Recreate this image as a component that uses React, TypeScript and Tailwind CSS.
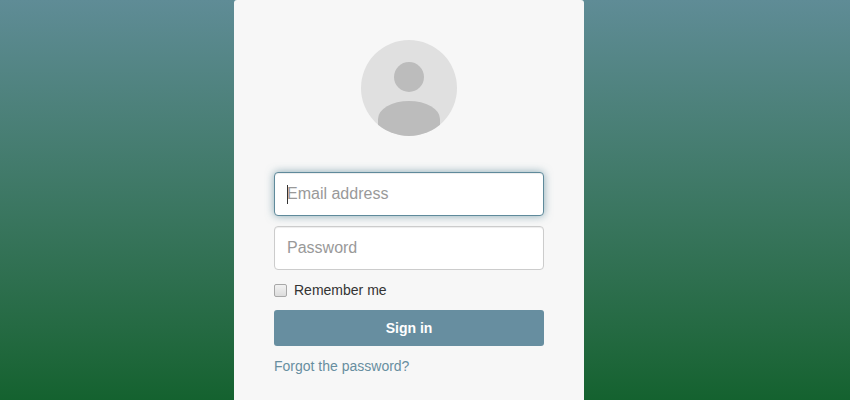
export default function App() {
  return (
    <div className="h-[400px] w-full overflow-hidden bg-gradient-to-b from-[#5f8c96] to-[#14622f] pr-8 font-['Liberation_Sans',Arial,sans-serif]">
      <div className="mx-auto h-[420px] w-[350px] rounded-[3px] bg-[#f7f7f7] px-10 pt-10">
        <svg viewBox="0 0 96 96" className="mx-auto block h-24 w-24">
          <defs>
            <clipPath id="avatar-circle">
              <circle cx="48" cy="48" r="48" />
            </clipPath>
          </defs>
          <circle cx="48" cy="48" r="48" fill="#e0e0e0" />
          <circle cx="48" cy="37" r="15" fill="#bcbcbc" />
          <path d="M17 79 a31 18 0 0 1 62 0 V96 H17 Z" fill="#bcbcbc" clipPath="url(#avatar-circle)" />
        </svg>

        <form className="mt-9 flex flex-col">
          <div className="relative">
            <input
              type="email"
              placeholder="Email address"
              className="block h-11 w-full rounded-[4px] border border-[#5f8a9b] bg-white px-3 text-base text-[#555] shadow-[inset_0_1px_1px_rgba(0,0,0,0.075),0_0_8px_rgba(102,144,159,0.75)] outline-none placeholder:text-[#999]"
            />
            <span className="absolute left-[13px] top-[13px] h-[19px] w-px bg-[#333]"></span>
          </div>
          <input
            type="password"
            placeholder="Password"
            className="mt-[10px] block h-11 w-full rounded-[4px] border border-[#ccc] bg-white px-3 text-base text-[#555] shadow-[inset_0_1px_1px_rgba(0,0,0,0.075)] outline-none placeholder:text-[#999]"
          />
          <label className="mt-[10px] flex h-[20px] items-center text-sm text-[#333]">
            <input
              type="checkbox"
              className="h-[13px] w-[13px] appearance-none rounded-[2px] border border-[#a8a8a8] bg-gradient-to-b from-[#f2f2f2] to-[#dcdcdc]"
            />
            <span className="ml-[7px]">Remember me</span>
          </label>
          <button
            type="button"
            className="mt-[10px] h-9 w-full rounded-[3px] bg-[#678ea0] text-sm font-bold text-white"
          >
            Sign in
          </button>
          <a href="#" className="mt-[10px] text-sm leading-5 text-[#678ea0]">
            Forgot the password?
          </a>
        </form>
      </div>
    </div>
  );
}
